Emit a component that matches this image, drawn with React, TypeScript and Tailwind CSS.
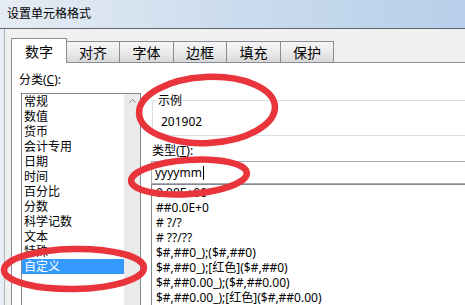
import React from 'react';

const categories = ['常规', '数值', '货币', '会计专用', '日期', '时间', '百分比', '分数', '科学记数', '文本', '特殊', '自定义'];

const formats = [
  '0.00E+00',
  '##0.0E+0',
  '# ?/?',
  '# ??/??',
  '$#,##0_);($#,##0)',
  '$#,##0_);[红色]($#,##0)',
  '$#,##0.00_);($#,##0.00)',
  '$#,##0.00_);[红色]($#,##0.00)',
];

const tabs = [
  { label: '数字', width: 'w-[56px]' },
  { label: '对齐', width: 'w-[54px]' },
  { label: '字体', width: 'w-[55px]' },
  { label: '边框', width: 'w-[54px]' },
  { label: '填充', width: 'w-[55px]' },
  { label: '保护', width: 'w-[54px]' },
];

function Tabs() {
  return (
    <div className="flex h-[24px] shrink-0 items-end">
      {tabs.map((tab, i) =>
        i === 0 ? (
          <div
            key={tab.label}
            className={`relative z-10 -mb-px flex h-[25px] shrink-0 items-center justify-center border border-b-0 border-[#898c95] bg-white text-[14px] ${tab.width}`}
          >
            {tab.label}
          </div>
        ) : (
          <div
            key={tab.label}
            className={`-ml-px flex h-[21px] shrink-0 items-center justify-center border border-b-0 border-[#898c95] bg-linear-to-b from-[#f5f5f5] via-[#ebebeb] to-[#d9d9d9] text-[14px] ${tab.width}`}
          >
            {tab.label}
          </div>
        )
      )}
    </div>
  );
}

function CategoryList() {
  return (
    <div className="ml-[2px] mt-[6px] flex h-[230px] w-[120px] shrink-0 border border-[#828790]">
      <div className="flex w-[102px] flex-col">
        {categories.map((c) => (
          <div
            key={c}
            className={`h-[15px] pl-[2px] text-[12px] leading-[15px] ${
              c === '自定义' ? 'bg-[#3399ff] text-white' : 'text-black'
            }`}
          >
            {c}
          </div>
        ))}
      </div>
      <div className="flex w-[16px] flex-col items-center bg-[#ebebeb] pt-[5px]">
        <svg width="7" height="4" viewBox="0 0 7 4">
          <path d="M0.5 3.5 L3.5 0.5 L6.5 3.5" fill="none" stroke="#7a7a7a" strokeWidth="1" />
        </svg>
      </div>
    </div>
  );
}

function RightColumn() {
  return (
    <div className="ml-[10px] flex w-[400px] shrink-0 flex-col pt-[37px]">
      <div className="relative ml-px h-[36px] rounded-l-[3px] border-y border-l border-[#d5dfe5]">
        <span className="absolute -top-[8px] left-[4px] bg-white px-px text-[12px] leading-[15px]">示例</span>
        <div className="pl-[8px] pt-[13px] text-[12px] leading-[15px]">201902</div>
      </div>
      <div className="ml-px mt-[7px] text-[12px] leading-[15px]">
        类型(<span className="underline">T</span>):
      </div>
      <div className="mt-[3px] flex h-[23px] items-center border border-[#abadb3] pl-[3px] text-[12px]">
        <span>yyyymm</span>
        <span className="ml-px inline-block h-[14px] w-px bg-black" />
      </div>
      <div className="flex h-[200px] flex-col border border-[#828790]">
        {formats.map((f) => (
          <div key={f} className="h-[15px] whitespace-nowrap pl-[4px] text-[12px] leading-[15px]">
            {f}
          </div>
        ))}
      </div>
    </div>
  );
}

function Annotations() {
  return (
    <svg className="pointer-events-none absolute left-0 top-0" width="465" height="305" viewBox="0 0 465 305">
      <g fill="none" stroke="#e8343a" strokeWidth="6.5">
        <ellipse cx="207" cy="110" rx="68" ry="33" transform="rotate(-3 207 110)" />
        <ellipse cx="189" cy="177" rx="58" ry="17" transform="rotate(-4 189 177)" />
        <ellipse cx="74" cy="269" rx="70" ry="20" transform="rotate(-1 74 269)" />
      </g>
    </svg>
  );
}

export default function App() {
  return (
    <div className="relative flex h-[305px] w-[465px] flex-col overflow-hidden bg-[#f0f0f0] font-['Noto_Sans','Noto_Sans_CJK_SC',sans-serif] text-black">
      <div className="flex h-[28px] shrink-0 items-center bg-linear-to-r from-[#e6ecf3] via-[#cbdcee] to-[#b7cfea] pl-[7px] text-[12px]">
        设置单元格格式
      </div>
      <div className="flex flex-1 border-t border-[#5f6770]">
        <div className="w-[5px] shrink-0 border-r border-[#a9b3bd] bg-[#e9eef4]" />
        <div className="flex min-w-0 flex-1 flex-col pl-[6px] pt-[9px]">
          <Tabs />
          <div className="flex flex-1 border-l border-t border-[#898c95] bg-white">
            <div className="flex shrink-0 flex-col pl-[7px] pt-[9px]">
              <div className="text-[12px] leading-[15px]">
                分类(<span className="underline">C</span>):
              </div>
              <CategoryList />
            </div>
            <RightColumn />
          </div>
        </div>
      </div>
      <Annotations />
    </div>
  );
}
